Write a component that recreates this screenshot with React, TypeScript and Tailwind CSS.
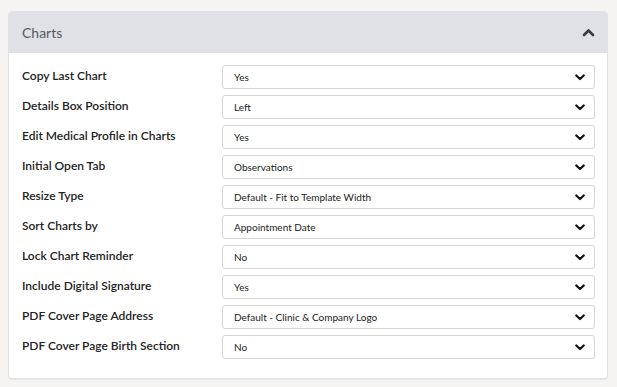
import React from "react";

const rows: [string, string][] = [
  ["Copy Last Chart", "Yes"],
  ["Details Box Position", "Left"],
  ["Edit Medical Profile in Charts", "Yes"],
  ["Initial Open Tab", "Observations"],
  ["Resize Type", "Default - Fit to Template Width"],
  ["Sort Charts by", "Appointment Date"],
  ["Lock Chart Reminder", "No"],
  ["Include Digital Signature", "Yes"],
  ["PDF Cover Page Address", "Default - Clinic & Company Logo"],
  ["PDF Cover Page Birth Section", "No"],
];

function ChevronDown() {
  return (
    <svg width="10" height="7" viewBox="0 0 10 7" className="shrink-0">
      <path d="M1.3 1.5 L5 5 L8.7 1.5" fill="none" stroke="#111" strokeWidth="2.2" strokeLinecap="round" strokeLinejoin="round" />
    </svg>
  );
}

function ChevronUp() {
  return (
    <svg width="13" height="9" viewBox="0 0 13 9">
      <path d="M2 7 L6.5 2.5 L11 7" fill="none" stroke="#333a44" strokeWidth="2.6" strokeLinecap="round" strokeLinejoin="round" />
    </svg>
  );
}

export default function App() {
  return (
    <div className="w-[617px] h-[387px] bg-[#f5f4f2] pt-[11px] pl-[8px] pr-[9px]" style={{ fontFamily: "Lato, 'Open Sans', sans-serif" }}>
      <div className="rounded-[4px] border border-[#e2e2e2] bg-white overflow-hidden shadow-[0_1px_1px_rgba(0,0,0,0.06)]">
        <div className="h-[41px] bg-[#dfe1e6] flex items-center justify-between pl-[13px] pr-[12px]">
          <span className="text-[14px] text-[#555a61]">Charts</span>
          <ChevronUp />
        </div>
        <div className="pt-[12px] pb-[19px] pl-[13px] pr-[12px] flex flex-col gap-[6px]">
          {rows.map(([label, value]) => (
            <div key={label} className="flex items-center h-[24px]">
              <div className="w-[200px] text-[12px] font-semibold text-[#222] leading-none pb-[3px]">{label}</div>
              <div className="flex-1 h-[24px] border border-[#d6d6d6] rounded-[3px] flex items-center justify-between pl-[11px] pr-[9px]">
                <span className="text-[10px] text-[#222]">{value}</span>
                <ChevronDown />
              </div>
            </div>
          ))}
        </div>
      </div>
    </div>
  );
}
